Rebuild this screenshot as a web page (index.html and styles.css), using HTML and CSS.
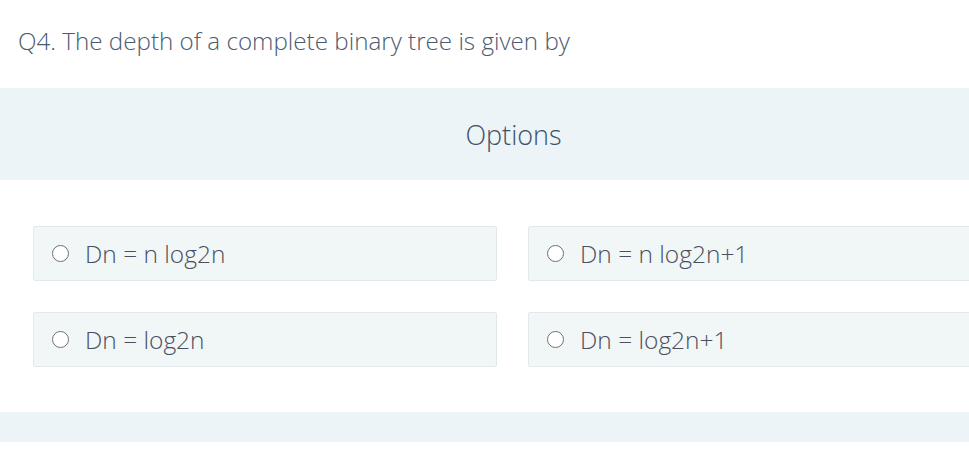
FILE: index.html
```html
<!DOCTYPE html>
<html>
<head>
<meta charset="utf-8">
<link rel="stylesheet" href="styles.css">
</head>
<body>
<div class="page">
  <div class="question">Q4. The depth of a complete binary tree is given by</div>
  <div class="options-head">Options</div>
  <div class="options-grid">
    <label class="option"><span class="radio"></span><span class="option-text">Dn = n log2n</span></label>
    <label class="option"><span class="radio"></span><span class="option-text">Dn = n log2n+1</span></label>
    <label class="option"><span class="radio"></span><span class="option-text">Dn = log2n</span></label>
    <label class="option"><span class="radio"></span><span class="option-text">Dn = log2n+1</span></label>
  </div>
  <div class="footer-band"></div>
</div>
</body>
</html>
```

FILE: styles.css
```css
html, body {
  margin: 0;
  padding: 0;
  background: #ffffff;
  overflow: hidden;
}
.page {
  width: 969px;
  height: 456px;
  overflow: hidden;
  font-family: "Open Sans", sans-serif;
}
.question {
  height: 88px;
  box-sizing: border-box;
  padding: 25px 0 0 18px;
  font-size: 24.2px;
  font-weight: 300;
  line-height: 32px;
  color: #4b5b6f;
}
.options-head {
  height: 92px;
  background: #ecf4f7;
  display: flex;
  align-items: center;
  justify-content: center;
  padding-left: 58px;
  box-sizing: border-box;
  font-family: "Open Sans", sans-serif;
  font-weight: 300;
  font-size: 27px;
  color: #3e5068;
}
.options-grid {
  display: grid;
  grid-template-columns: 464px 464px;
  column-gap: 31px;
  row-gap: 31px;
  padding: 46px 0 0 33px;
  width: 1100px;
}
.option {
  height: 55px;
  box-sizing: border-box;
  background: #f1f6f7;
  border: 1px solid #e2e9ec;
  border-radius: 2px;
  display: flex;
  align-items: center;
  padding-left: 18px;
}
.radio {
  width: 15px;
  height: 15px;
  border: 1.5px solid #6d6f72;
  border-radius: 50%;
  background: #ffffff;
  flex: none;
}
.option-text {
  margin-left: 16px;
  font-size: 24.5px;
  font-weight: 300;
  line-height: 30px;
  color: #4a4f5d;
}
.footer-band {
  margin-top: 45px;
  height: 30px;
  background: #ecf4f7;
}
```
